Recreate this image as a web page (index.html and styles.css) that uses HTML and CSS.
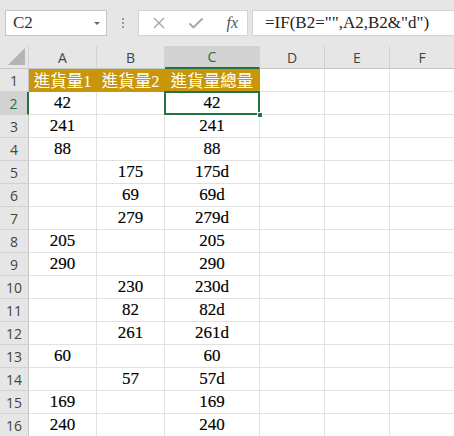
FILE: index.html
```html
<!DOCTYPE html>
<html>
<head>
<meta charset="utf-8">
<link rel="stylesheet" href="styles.css">
</head>
<body>
<div class="toolbar">
  <div class="namebox"><span class="nb-text">C2</span><span class="nb-arrow"></span></div>
  <div class="dots"><i></i><i></i><i></i></div>
  <div class="btns">
    <svg class="ic" width="14" height="14" viewBox="0 0 14 14"><path d="M2 2 L12 12 M12 2 L2 12" stroke="#a6a6a6" stroke-width="1.4" fill="none"/></svg>
    <svg class="ic" width="16" height="14" viewBox="0 0 16 14"><path d="M1.5 7.5 L5.5 11.5 L14.5 2.5" stroke="#a6a6a6" stroke-width="1.8" fill="none"/></svg>
    <span class="fx">fx</span>
  </div>
  <div class="formula">=IF(B2="",A2,B2&amp;"d")</div>
</div>
<div class="sheet">
  <div class="h corner"><span class="tri"></span></div>
  <div class="h">A</div><div class="h">B</div><div class="h sel">C</div><div class="h">D</div><div class="h">E</div><div class="h">F</div>

  <div class="r">1</div><div class="c gold">進貨量1</div><div class="c gold">進貨量2</div><div class="c gold">進貨量總量</div><div class="c"></div><div class="c"></div><div class="c"></div>
  <div class="r rsel">2</div><div class="c">42</div><div class="c"></div><div class="c active">42<span class="handle"></span></div><div class="c"></div><div class="c"></div><div class="c"></div>
  <div class="r">3</div><div class="c">241</div><div class="c"></div><div class="c">241</div><div class="c"></div><div class="c"></div><div class="c"></div>
  <div class="r">4</div><div class="c">88</div><div class="c"></div><div class="c">88</div><div class="c"></div><div class="c"></div><div class="c"></div>
  <div class="r">5</div><div class="c"></div><div class="c">175</div><div class="c">175d</div><div class="c"></div><div class="c"></div><div class="c"></div>
  <div class="r">6</div><div class="c"></div><div class="c">69</div><div class="c">69d</div><div class="c"></div><div class="c"></div><div class="c"></div>
  <div class="r">7</div><div class="c"></div><div class="c">279</div><div class="c">279d</div><div class="c"></div><div class="c"></div><div class="c"></div>
  <div class="r">8</div><div class="c">205</div><div class="c"></div><div class="c">205</div><div class="c"></div><div class="c"></div><div class="c"></div>
  <div class="r">9</div><div class="c">290</div><div class="c"></div><div class="c">290</div><div class="c"></div><div class="c"></div><div class="c"></div>
  <div class="r">10</div><div class="c"></div><div class="c">230</div><div class="c">230d</div><div class="c"></div><div class="c"></div><div class="c"></div>
  <div class="r">11</div><div class="c"></div><div class="c">82</div><div class="c">82d</div><div class="c"></div><div class="c"></div><div class="c"></div>
  <div class="r">12</div><div class="c"></div><div class="c">261</div><div class="c">261d</div><div class="c"></div><div class="c"></div><div class="c"></div>
  <div class="r">13</div><div class="c">60</div><div class="c"></div><div class="c">60</div><div class="c"></div><div class="c"></div><div class="c"></div>
  <div class="r">14</div><div class="c"></div><div class="c">57</div><div class="c">57d</div><div class="c"></div><div class="c"></div><div class="c"></div>
  <div class="r">15</div><div class="c">169</div><div class="c"></div><div class="c">169</div><div class="c"></div><div class="c"></div><div class="c"></div>
  <div class="r">16</div><div class="c">240</div><div class="c"></div><div class="c">240</div><div class="c"></div><div class="c"></div><div class="c"></div>
</div>
</body>
</html>
```
FILE: styles.css
```css
* { box-sizing: border-box; }
html, body { margin: 0; padding: 0; background: #fff; overflow: hidden; }
body { width: 454px; height: 436px; }

.toolbar {
  height: 46px;
  background: #e6e6e6;
  display: flex;
  align-items: flex-start;
  padding-top: 10px;
  padding-left: 5px;
}
.namebox {
  width: 102px; height: 26px;
  background: #fff;
  border: 1px solid #c6c6c6;
  display: flex; align-items: center; justify-content: space-between;
  padding: 0 6px 0 7px;
}
.nb-text { font-family: "Liberation Serif", serif; font-size: 17px; color: #333; }
.nb-arrow {
  width: 0; height: 0;
  border-left: 3px solid transparent; border-right: 3px solid transparent;
  border-top: 3px solid #666;
}
.dots {
  width: 31px; height: 26px;
  display: flex; flex-direction: column; align-items: center; justify-content: center; gap: 2px;
}
.dots i { display: block; width: 2px; height: 2px; background: #9a9a9a; }
.btns {
  width: 110px; height: 26px;
  background: #fff;
  border: 1px solid #d4d4d4;
  display: flex; align-items: center; justify-content: space-between;
  padding: 0 9px 0 13px;
}
.fx { font-family: "Liberation Serif", serif; font-style: italic; font-size: 16px; color: #555; }
.formula {
  margin-left: 4px;
  flex: 1; height: 26px;
  background: #fff;
  border: 1px solid #d4d4d4; border-right: none;
  font-family: "Liberation Serif", serif; font-size: 17px; color: #222;
  padding-left: 12px; line-height: 24px;
}

.sheet {
  display: grid;
  grid-template-columns: 29px 68px 68px 95px 65px 65px 65px;
  grid-auto-rows: 23px;
}
.h {
  background: #e6e6e6;
  border-right: 1px solid #d2d2d2;
  border-bottom: 1px solid #c6c6c6;
  font-family: "Open Sans", sans-serif; font-size: 14px; color: #444;
  display: flex; align-items: center; justify-content: center;
}
.h.sel { background: #d2d2d2; color: #217346; border-bottom: 2px solid #217346; }
.corner { position: relative; }
.tri {
  position: absolute; right: 3px; bottom: 3px;
  width: 0; height: 0;
  border-left: 17px solid transparent;
  border-bottom: 17px solid #b4b4b4;
}
.r {
  background: #e6e6e6;
  border-right: 1px solid #c6c6c6;
  border-bottom: 1px solid #d2d2d2;
  font-family: "Open Sans", sans-serif; font-size: 14px; color: #444;
  display: flex; align-items: center; justify-content: center;
}
.r.rsel { background: #d2d2d2; color: #217346; border-right: 2px solid #217346; }
.c {
  border-right: 1px solid #e1e1e1;
  border-bottom: 1px solid #e1e1e1;
  font-family: "Liberation Serif", serif; font-size: 17px; color: #000;
  -webkit-text-stroke: 0.15px #000;
  display: flex; align-items: center; justify-content: center;
  white-space: nowrap;
}
.c.gold {
  background: #c8960a;
  border-color: #c8960a;
  color: #fff;
  -webkit-text-stroke: 0;
  font-family: "Liberation Serif", "Noto Sans CJK TC", serif;
  font-size: 16.5px;
  overflow: visible;
}
.c.active { position: relative; }
.c.active::after {
  content: "";
  position: absolute; left: -1px; top: -1px; right: -1px; bottom: -1px;
  border: 2px solid #217346;
}
.handle {
  position: absolute; right: -4px; bottom: -4px;
  width: 6px; height: 6px;
  background: #217346; border: 1px solid #fff;
  z-index: 2;
}
```
